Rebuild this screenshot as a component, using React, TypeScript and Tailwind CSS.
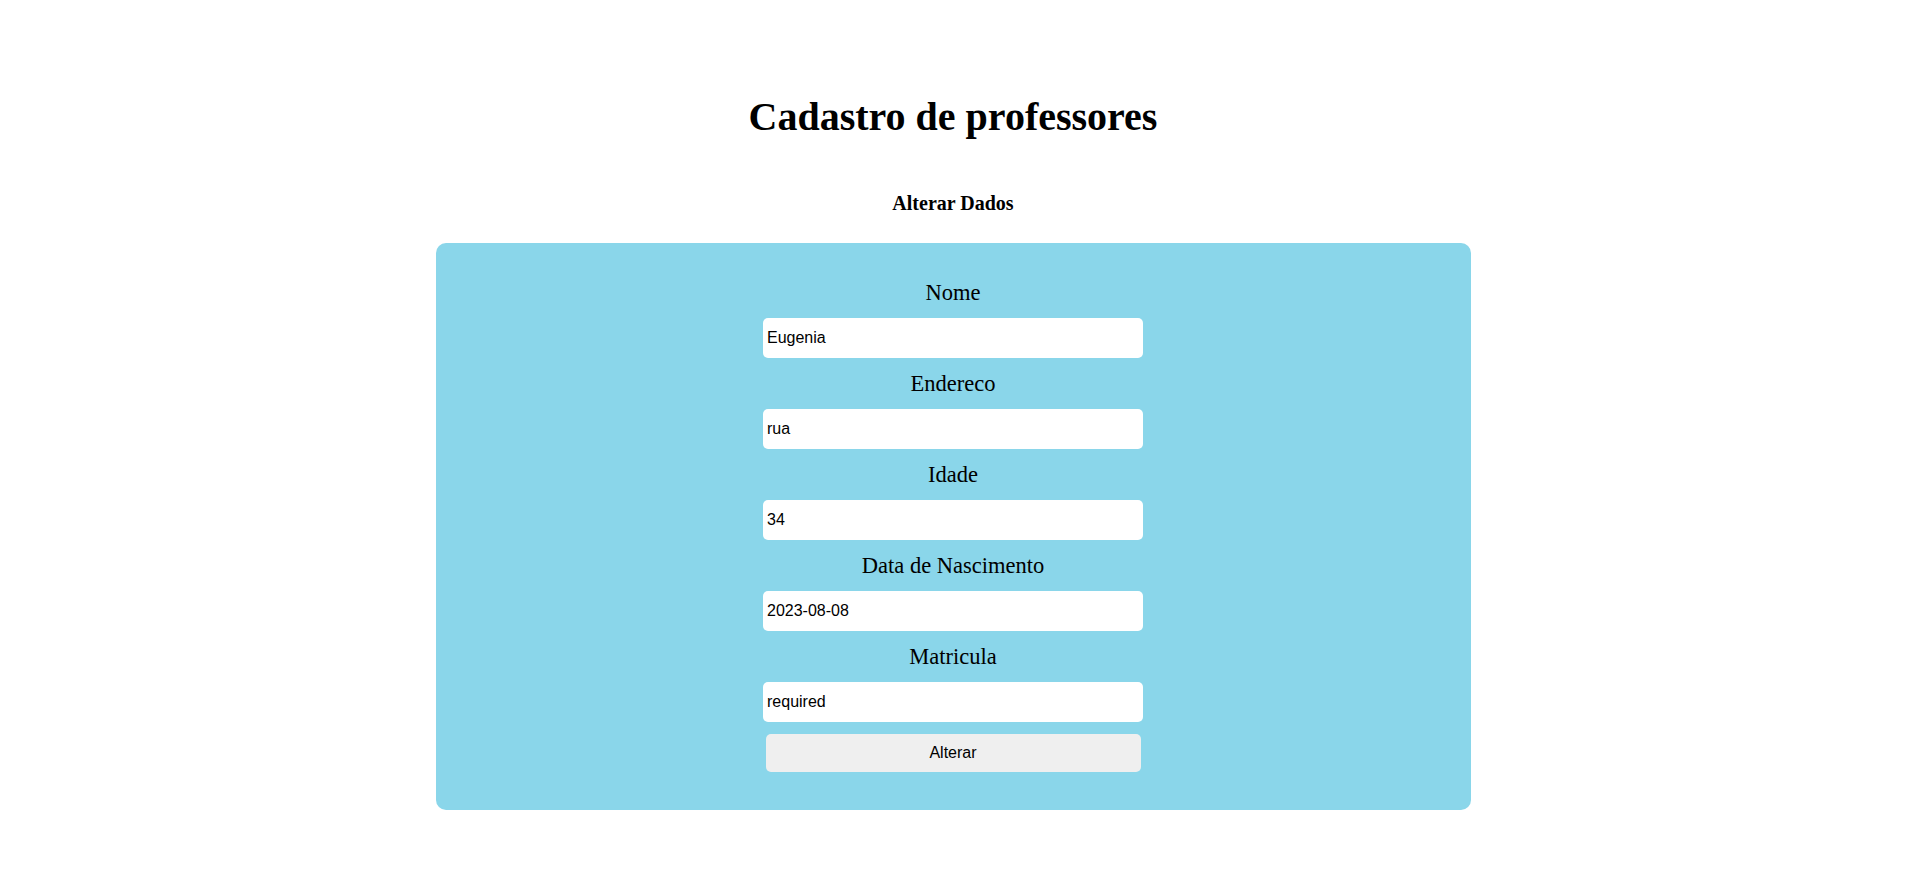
import React from "react";

const fields = [
  { label: "Nome", value: "Eugenia" },
  { label: "Endereco", value: "rua" },
  { label: "Idade", value: "34" },
  { label: "Data de Nascimento", value: "2023-08-08" },
  { label: "Matricula", value: "required" },
];

export default function App() {
  return (
    <div className="min-h-screen bg-white pr-[7px] pt-[94px] text-black" style={{ fontFamily: '"Liberation Serif", "Times New Roman", serif' }}>
      <h1 className="text-center text-[40px] font-bold leading-[46px]">Cadastro de professores</h1>
      <h3 className="mt-[52px] text-center text-[20px] font-bold leading-[23px]">Alterar Dados</h3>
      <div className="mx-auto mt-[28px] flex w-[1035px] flex-col items-center rounded-[10px] bg-[#8ad6ea] pt-[37px] pb-[38px]">
        {fields.map((f) => (
          <div key={f.label} className="flex flex-col items-center">
            <label className="text-[22.5px] leading-[25px]">{f.label}</label>
            <input
              readOnly
              value={f.value}
              className="mt-[13px] mb-[13px] h-[40px] w-[380px] rounded-[5px] bg-white px-[4px] text-[16px] text-black outline-none"
              style={{ fontFamily: '"Liberation Sans", Arial, sans-serif' }}
            />
          </div>
        ))}
        <button
          className="-mt-[1px] h-[38px] w-[375px] rounded-[5px] bg-[#efefef] text-[16px] text-black"
          style={{ fontFamily: '"Liberation Sans", Arial, sans-serif' }}
        >
          Alterar
        </button>
      </div>
    </div>
  );
}
